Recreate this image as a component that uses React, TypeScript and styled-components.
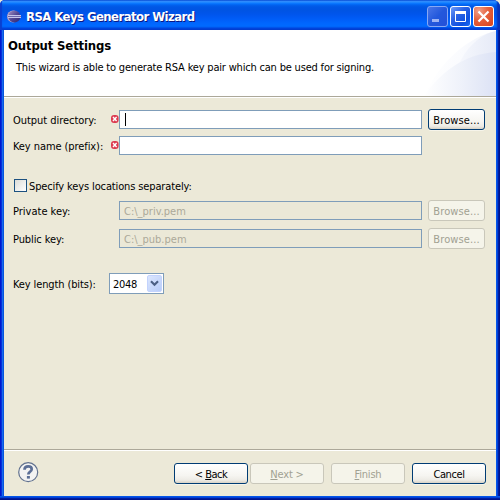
import React from "react";
import styled, { createGlobalStyle, css } from "styled-components";

const Global = createGlobalStyle`
  * { box-sizing: border-box; }
  body { margin: 0; background: #ece9d8; overflow: hidden; }
`;

const Window = styled.div`
  width: 500px;
  height: 500px;
  display: flex;
  flex-direction: column;
  font: 11px/13px "DejaVu Sans Condensed", "DejaVu Sans", sans-serif;
  font-stretch: condensed;
  color: #000;
  background: #0831d9;
  border-radius: 5px 7px 0 0;
  overflow: hidden;
`;

const TitleBar = styled.header`
  height: 30px;
  flex: none;
  display: flex;
  align-items: center;
  padding: 3px 6px 0 7px;
  background: linear-gradient(
    to bottom,
    #0058e6 0, #3a93ff 1px, #288eff 2px, #127dff 3px, #036ffc 4px,
    #0262ee 5px, #0057e5 7px, #0054e3 10px, #0055eb 14px, #005bf5 18px,
    #0066fe 23px, #006aff 26px, #0062f5 27px, #0046e0 28px, #0042d6 30px
  );
  box-shadow: inset 2px 0 1px #0a3fd0, inset -3px 0 2px #0831b8;
`;

const TitleText = styled.h1`
  flex: 1;
  margin: 0 0 0 5px;
  font-size: 13px;
  line-height: 16px;
  font-weight: bold;
  letter-spacing: -0.56px;
  color: #fff;
  text-shadow: 1px 1px 0 #0a1883;
  white-space: nowrap;
`;

const Controls = styled.div`
  display: flex;
  gap: 2px;
`;

const ControlButton = styled.div<{ $kind: "min" | "max" | "close" }>`
  width: 21px;
  height: 21px;
  border-radius: 3px;
  border: 1px solid ${(p) => (p.$kind === "min" ? "#88a8f4" : "#fff")};
  background: ${(p) =>
    p.$kind === "close"
      ? "radial-gradient(circle at 25% 20%, #f0a08a 0, #e5603c 45%, #d6431c 100%)"
      : p.$kind === "min"
      ? "linear-gradient(135deg, #4a76e8, #2358dc 50%, #2350d8)"
      : "linear-gradient(135deg, #6f9cf8 0, #2a62e4 40%, #0d50e0 75%, #1a6cf4)"};
  svg { display: block; }
`;

const Frame = styled.div`
  flex: 1;
  min-height: 0;
  display: flex;
  flex-direction: column;
  padding: 0 4px 4px;
  background:
    linear-gradient(to bottom, #0455e8 0 1px, #0141d9 1px 2px, #001ea0 2px 3px, #00138c 3px 4px) bottom / 100% 4px no-repeat,
    linear-gradient(to right, #0019cf 0 1px, #0831d9 1px 2px, #166aee 2px 3px, #0855dd 3px 4px) left / 4px 100% no-repeat,
    linear-gradient(to right, #0455e8 0 1px, #0141d9 1px 2px, #001ea0 2px 3px, #00138c 3px 4px) right / 4px 100% no-repeat,
    #ece9d8;
`;

const Banner = styled.section`
  height: 68px;
  flex: none;
  display: flex;
  justify-content: space-between;
  background: #fff;
  border-bottom: 1px solid #fff;
  box-shadow: inset 0 -1px 0 #aca899;
  overflow: hidden;
`;

const BannerText = styled.div`
  padding: 8px 0 0 4px;
  white-space: nowrap;
`;

const Heading = styled.h2`
  margin: 0;
  font-size: 13px;
  line-height: 16px;
  letter-spacing: -0.16px;
`;

const Description = styled.p`
  margin: 7px 0 0 8px;
  letter-spacing: -0.19px;
`;

const Form = styled.main`
  flex: 1;
  padding: 11px 10px 0 9px;
  display: flex;
  flex-direction: column;
`;

const Row = styled.div<{ $h: number; $mt?: number }>`
  height: ${(p) => p.$h}px;
  margin-top: ${(p) => p.$mt ?? 0}px;
  display: flex;
  align-items: center;
`;

const Text = styled.span<{ $ls?: number }>`
  letter-spacing: ${(p) => p.$ls ?? 0}px;
  white-space: nowrap;
`;

const Label = styled(Text)<{ $w?: number }>`
  width: ${(p) => p.$w ?? 98}px;
  flex: none;
  padding-top: 2px;
`;

const Marker = styled.span`
  width: 8px;
  height: 19px;
  flex: none;
  svg { display: block; margin-top: 5px; }
`;

const Field = styled.div<{ $disabled?: boolean }>`
  width: 303px;
  height: 19px;
  flex: none;
  display: flex;
  align-items: center;
  padding: ${(p) => (p.$disabled ? "2px 0 0 4px" : "0 0 0 5px")};
  border: 1px solid #7f9db9;
  background: ${(p) => (p.$disabled ? "#ebe8d7" : "#fff")};
  color: #aca899;
`;

const Caret = styled.span`
  width: 1px;
  height: 13px;
  background: #000;
`;

const Button = styled.button<{ $w: number; $ml?: number }>`
  width: ${(p) => p.$w}px;
  height: 21px;
  margin: 0 0 0 ${(p) => p.$ml ?? 0}px;
  padding: 1px 0 0;
  flex: none;
  font: inherit;
  color: #000;
  border: 1px solid #003c74;
  border-radius: 3px;
  background: linear-gradient(#fff, #f6f5f1 60%, #edebe5 85%, #d8d2c6);
  box-shadow: 0 1px 0 #f6f4ea;
  white-space: nowrap;
  ${(p) =>
    p.disabled &&
    css`
      color: #a1a192;
      border-color: #c9c7ba;
      background: #f5f4ea;
      box-shadow: none;
    `}
`;

const CheckBox = styled.span`
  width: 13px;
  height: 13px;
  margin: 0 2px 0 1px;
  border: 1px solid #1c5180;
  background: linear-gradient(135deg, #dcdcd7, #fff);
`;

const Combo = styled.div`
  width: 55px;
  height: 21px;
  padding: 1px 1px 1px 3px;
  display: flex;
  align-items: center;
  justify-content: space-between;
  border: 1px solid #7f9db9;
  background: #fff;
`;

const ComboValue = styled(Text)`
  padding-top: 2px;
`;

const ComboArrow = styled.span`
  width: 15px;
  height: 17px;
  display: grid;
  place-items: center;
  border-radius: 2px;
  background: linear-gradient(135deg, #dbe6fe, #b9cdf8);
  border: 1px solid #c3d3fd;
`;

const Footer = styled.footer`
  height: 47px;
  flex: none;
  display: flex;
  align-items: flex-start;
  padding: 12px 10px 0 14px;
  border-top: 1px solid #aca899;
  box-shadow: inset 0 1px 0 #fff;
`;

const Actions = styled.div`
  display: flex;
  margin: 1px 0 0 auto;
`;

const EclipseIcon = () => (
  <svg width="14" height="14" viewBox="0 0 14 14">
    <defs>
      <linearGradient id="orb" x1="0" x2="1" y1="0" y2="1">
        <stop offset="0" stopColor="#a58fc0" />
        <stop offset=".5" stopColor="#524894" />
        <stop offset="1" stopColor="#2d2370" />
      </linearGradient>
    </defs>
    <ellipse cx="6.2" cy="6.5" rx="6.2" ry="6" fill="#b4a3c6" />
    <circle cx="7.4" cy="6.5" r="6" fill="url(#orb)" />
    <path d="M1 5.5h13M1 7.5h13" stroke="#c5c5ea" />
    <path d="M1 6.5h13" stroke="#6e66ad" />
  </svg>
);

const ErrorIcon = () => (
  <svg width="8" height="8" viewBox="0 0 8 8">
    <rect x="0" y="0" width="7.6" height="8" rx="3" fill="#dc3b50" />
    <path d="M2 2l3.6 4M5.6 2L2 6" stroke="#fff" strokeWidth="1.4" />
  </svg>
);

const BannerArt = () => (
  <svg width="76" height="66" viewBox="0 0 76 66">
    <defs>
      <linearGradient id="wide" x1="0" x2="1">
        <stop offset="0" stopColor="#fff" />
        <stop offset=".5" stopColor="#fafbfe" />
        <stop offset="1" stopColor="#f1f4fb" />
      </linearGradient>
      <linearGradient id="low" x1="0" x2="1">
        <stop offset="0" stopColor="#fff" />
        <stop offset=".5" stopColor="#eff2fa" />
        <stop offset="1" stopColor="#dce2f5" />
      </linearGradient>
      <linearGradient id="side" x1="0" x2="1">
        <stop offset="0" stopColor="#f6f8fd" />
        <stop offset="1" stopColor="#e6eaf7" />
      </linearGradient>
    </defs>
    <path d="M4 66C18 36 44 8 76 1V66Z" fill="url(#wide)" />
    <path d="M38 36C46 18 60 4 76 1V30L38 50Z" fill="url(#side)" />
    <path d="M4 66C22 40 46 24 76 22V66Z" fill="url(#low)" />
  </svg>
);

const HelpIcon = () => (
  <svg width="21" height="21" viewBox="0 0 21 21">
    <circle cx="10.2" cy="10.2" r="9.5" fill="#f3f3f2" stroke="#62728f" strokeWidth="1.2" />
    <path
      d="M6.5 7.8C6.5 5.3 8 4.4 10.2 4.4c2.1 0 3.5 1 3.5 2.8 0 2.5-3.4 2.7-3.4 5.3"
      fill="none" stroke="#5c6f96" strokeWidth="2.7"
    />
    <rect x="8.9" y="14" width="3" height="2.6" fill="#5c6f96" />
  </svg>
);

export default function App() {
  return (
    <>
      <Global />
      <Window>
        <TitleBar>
          <EclipseIcon />
          <TitleText>RSA Keys Generator Wizard</TitleText>
          <Controls>
            <ControlButton $kind="min">
              <svg width="19" height="19"><rect x="4" y="12" width="7" height="3" fill="#9db3f3" /></svg>
            </ControlButton>
            <ControlButton $kind="max">
              <svg width="19" height="19">
                <path d="M4.5 5v9.5h10V5" fill="none" stroke="#fff" />
                <rect x="4" y="4" width="11" height="3" fill="#fff" />
              </svg>
            </ControlButton>
            <ControlButton $kind="close">
              <svg width="19" height="19">
                <path d="M4.5 4.5l10 10M14.5 4.5l-10 10" stroke="#fff" strokeWidth="2.2" />
              </svg>
            </ControlButton>
          </Controls>
        </TitleBar>
        <Frame>
          <Banner>
            <BannerText>
              <Heading>Output Settings</Heading>
              <Description>This wizard is able to generate RSA key pair which can be used for signing.</Description>
            </BannerText>
            <BannerArt />
          </Banner>
          <Form>
            <Row $h={21}>
              <Label $ls={-0.04}>Output directory:</Label>
              <Marker><ErrorIcon /></Marker>
              <Field><Caret /></Field>
              <Button $w={57} $ml={6}><Text $ls={0.1}>Browse...</Text></Button>
            </Row>
            <Row $h={19} $mt={6}>
              <Label $ls={-0.08}>Key name (prefix):</Label>
              <Marker><ErrorIcon /></Marker>
              <Field />
            </Row>
            <Row $h={13} $mt={24}>
              <CheckBox />
              <Label $w={180} $ls={-0.13}>Specify keys locations separately:</Label>
            </Row>
            <Row $h={21} $mt={8}>
              <Label $w={106}>Private key:</Label>
              <Field $disabled><Text>C:\_priv.pem</Text></Field>
              <Button disabled $w={57} $ml={6}><Text $ls={0.1}>Browse...</Text></Button>
            </Row>
            <Row $h={21} $mt={7}>
              <Label $w={106} $ls={-0.1}>Public key:</Label>
              <Field $disabled><Text>C:\_pub.pem</Text></Field>
              <Button disabled $w={57} $ml={6}><Text $ls={0.1}>Browse...</Text></Button>
            </Row>
            <Row $h={21} $mt={24}>
              <Label $w={96} $ls={-0.12}>Key length (bits):</Label>
              <Combo>
                <ComboValue $ls={-0.3}>2048</ComboValue>
                <ComboArrow>
                  <svg width="9" height="7"><path d="M1 1.2l3.5 3.5L8 1.2" fill="none" stroke="#4d6185" strokeWidth="2.2" /></svg>
                </ComboArrow>
              </Combo>
            </Row>
          </Form>
          <Footer>
            <HelpIcon />
            <Actions>
              <Button $w={74}><Text $ls={-0.5}>&lt; <u>B</u>ack</Text></Button>
              <Button disabled $w={74} $ml={2}><Text $ls={-0.2}><u>N</u>ext &gt;</Text></Button>
              <Button disabled $w={74} $ml={7}><Text $ls={-0.2}><u>F</u>inish</Text></Button>
              <Button $w={74} $ml={7}><Text $ls={-0.4}>Cancel</Text></Button>
            </Actions>
          </Footer>
        </Frame>
      </Window>
    </>
  );
}
